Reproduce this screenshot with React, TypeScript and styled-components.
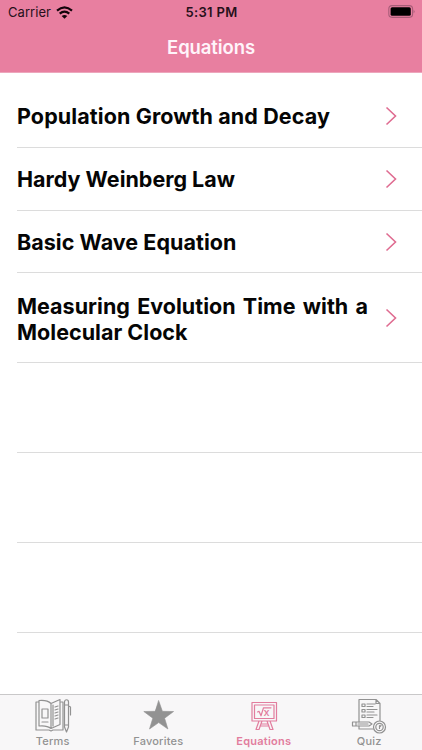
import React from "react";
import styled, { createGlobalStyle } from "styled-components";

const GlobalStyle = createGlobalStyle`
  * { box-sizing: border-box; }
  body { margin: 0; background: #fff; font-family: Inter, "Liberation Sans", sans-serif; }
`;

const Screen = styled.main`
  display: flex;
  flex-direction: column;
  width: 422px;
  height: 750px;
  overflow: hidden;
  background: #fff;
`;

const Header = styled.header`
  display: flex;
  flex-direction: column;
  height: 73px;
  flex: none;
  background: #e87fa0;
  border-bottom: 1px solid #eda6bc;
`;

const StatusBar = styled.div`
  display: grid;
  grid-template-columns: 1fr auto 1fr;
  align-items: center;
  height: 23px;
  padding: 0 7px 0 8px;
  color: #26101a;
`;

const Carrier = styled.div`
  display: flex;
  align-items: center;
  gap: 5px;
  font-size: 13px;
  line-height: 23px;
  letter-spacing: 0.05px;
`;

const Clock = styled.div`
  font-size: 13px;
  font-weight: 600;
  line-height: 24px;
  letter-spacing: 0.3px;
`;

const Battery = styled.div`
  display: flex;
  justify-content: flex-end;
  margin-top: -1px;
`;

const Title = styled.h1`
  margin: 0;
  color: #fff4fa;
  font-size: 18.5px;
  font-weight: 600;
  line-height: 49px;
  letter-spacing: -0.1px;
  text-align: center;
`;

const List = styled.ul`
  flex: 1;
  margin: 0;
  padding: 12px 0 0 17px;
  list-style: none;
`;

const Row = styled.li<{ $height: number }>`
  display: flex;
  align-items: center;
  height: ${(p) => p.$height}px;
  border-bottom: 1px solid #dcdcdc;
`;

const RowLabel = styled.span<{ $tracking: number; $drop: number }>`
  width: 351px;
  padding-top: ${(p) => p.$drop}px;
  color: #050505;
  font-size: 21.5px;
  font-weight: 700;
  line-height: 26px;
  letter-spacing: ${(p) => p.$tracking}px;
  text-align: justify;
`;

const Chevron = styled.svg`
  width: 12px;
  height: 20px;
  margin-left: 17px;
`;

const TabBar = styled.nav`
  display: grid;
  grid-template-columns: repeat(4, 1fr);
  height: 56px;
  flex: none;
  background: #f8f7f8;
  border-top: 1px solid #c9c8c9;
`;

const Tab = styled.div<{ $active?: boolean }>`
  display: flex;
  flex-direction: column;
  align-items: center;
  padding-top: 2px;
  color: ${(p) => (p.$active ? "#e27d9e" : "#929292")};
`;

const TabIcon = styled.svg`
  width: 38px;
  height: 38px;
  fill: none;
  stroke: currentColor;
  stroke-width: 1.2;
  stroke-linecap: round;
  stroke-linejoin: round;
`;

const TabLabel = styled.span<{ $strong?: boolean }>`
  font-size: 11px;
  font-weight: ${(p) => (p.$strong ? 600 : 500)};
  line-height: 13px;
  letter-spacing: ${(p) => (p.$strong ? 0.25 : 0.2)}px;
`;

const RadicalText = styled.text`
  fill: currentColor;
  stroke: none;
  font: 500 11px Inter, sans-serif;
`;

const equations = [
  { name: "Population Growth and Decay", height: 63, tracking: 0.1, drop: 0 },
  { name: "Hardy Weinberg Law", height: 63, tracking: 0, drop: 0 },
  { name: "Basic Wave Equation", height: 62, tracking: 0.04, drop: 0 },
  { name: "Measuring Evolution Time with a Molecular Clock", height: 90, tracking: 0.03, drop: 2 },
];
const emptyRows = [90, 90, 90];

const TermsIcon = () => (
  <TabIcon viewBox="0 0 38 38">
    <path d="M5 5H2v28h13l2 1 2-1h10V5h-2M5 3.5c5-.5 9 0 12 3v25c-3-2.500-7-3-12-2.500zM17 6.500l9-4v25l-9 4M19 8v21M8 12h6v9H8zM8 25h6M21 10l3-1M21 13l3-1M21 16l3-1M21 19l3-1M21 22l3-1" />
    <path d="M30.500 5c0-3 4-3 4 0v25l-2 5-2-5zM30.500 8h4M30.500 28h4M34.500 9l2 1v8" />
  </TabIcon>
);

const StarIcon = () => (
  <TabIcon viewBox="0 0 38 38">
    <path fill="currentColor" d="m19.700 3.800 3.700 10.500 11.200.2-9 6.700 3.300 10.800-9.200-6.400-9.200 6.400 3.300-10.800-9-6.700 11.200-.2z" strokeWidth="0.6" />
  </TabIcon>
);

const BoardIcon = () => (
  <TabIcon viewBox="0 0 38 38">
    <path d="M7 5.500h24.500v18.500H7zM9.500 8h19.500v13.500H9.500zM14 24l-3 8.500h3l3-8.500M22 24l3 8.500h3L25 24M16 27h7M15 29h9" />
    <path d="m12.500 15 1.500-.7 2 4.500 2.500-8H26" />
    <RadicalText x="18.500" y="19">x</RadicalText>
  </TabIcon>
);

const QuizIcon = () => (
  <TabIcon viewBox="0 0 38 38">
    <path d="M9 25V2.500h17l4 4v17M26 2.500v4h4M12 7h3v2.500h-3zM12 12.500h3V15h-3zM12 18h3v2.500h-3zM17 7h8M17 9.500h6M17 12.500h10M17 15h7M17 18h10M17 20.500h6M9 29v3h14" />
    <path d="M2.500 25H6v4H2.500zM6 25h13l3 2-3 2H6M8 27h10" />
    <circle cx="29.500" cy="30" r="6" />
    <circle cx="29.500" cy="30" r="3.700" />
    <path d="M29.500 31.500v-3M29.500 30l1.500-1.500" />
  </TabIcon>
);

export default function App() {
  return (
    <Screen>
      <GlobalStyle />
      <Header>
        <StatusBar>
          <Carrier>
            Carrier
            <svg width="17" height="13" viewBox="0 0 17 13" fill="none" stroke="#12040a" strokeWidth="2.2">
              <path d="M1 4.600Q8.500-1.800 16 4.600M3.700 7.700q4.800-4.100 9.600 0" />
              <path d="m5.700 10 2.800 2.700 2.800-2.700Q8.500 7.800 5.700 10Z" fill="#12040a" stroke="none" />
            </svg>
          </Carrier>
          <Clock>5:31 PM</Clock>
          <Battery>
            <svg width="27" height="13" viewBox="0 0 27 13">
              <rect x="0.800" y="0.600" width="23.800" height="11.800" rx="3.300" fill="none" stroke="#a85d78" strokeWidth="1.100" />
              <rect x="2.600" y="2.300" width="20.200" height="8.400" rx="1.500" fill="#000" />
              <path d="M25.600 4.700q2 1.800 0 3.600z" fill="#a85d78" />
            </svg>
          </Battery>
        </StatusBar>
        <Title>Equations</Title>
      </Header>
      <List>
        {equations.map((item) => (
          <Row key={item.name} $height={item.height}>
            <RowLabel $tracking={item.tracking} $drop={item.drop}>{item.name}</RowLabel>
            <Chevron viewBox="0 0 12 20" fill="none" stroke="#df6c91" strokeWidth="1.600">
              <path d="m1.500 1.500 9 8.500-9 8.500" />
            </Chevron>
          </Row>
        ))}
        {emptyRows.map((height, index) => (
          <Row key={index} $height={height} />
        ))}
      </List>
      <TabBar>
        <Tab><TermsIcon /><TabLabel>Terms</TabLabel></Tab>
        <Tab><StarIcon /><TabLabel>Favorites</TabLabel></Tab>
        <Tab $active><BoardIcon /><TabLabel $strong>Equations</TabLabel></Tab>
        <Tab><QuizIcon /><TabLabel>Quiz</TabLabel></Tab>
      </TabBar>
    </Screen>
  );
}
